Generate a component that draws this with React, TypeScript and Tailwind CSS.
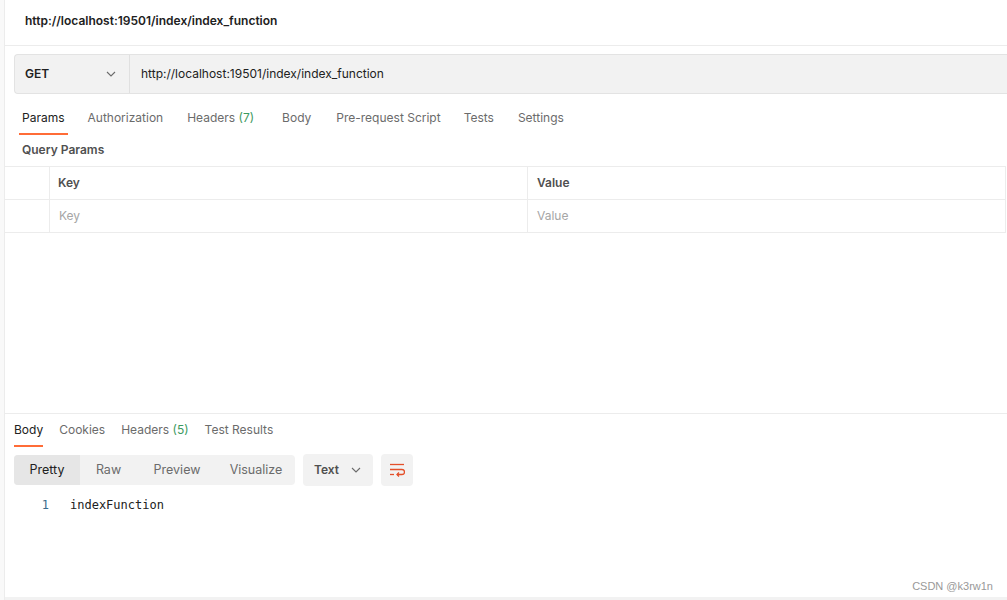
import React from "react";

export default function App() {
  const font = { fontFamily: "Inter, 'Noto Sans', sans-serif" };
  return (
    <div className="w-[1007px] h-[600px] bg-white flex overflow-hidden text-[12px]" style={font}>
      <div className="w-[5px] shrink-0 bg-[#f9f9f9] border-r border-[#ececec]" />
      <div className="flex-1 flex flex-col min-w-0">
        {/* Title */}
        <div className="h-[46px] shrink-0 border-b border-[#ececec] flex items-center pl-[20px] pb-[4px]">
          <span className="font-semibold text-[#212121] text-[12px]">http://localhost:19501/index/index_function</span>
        </div>
        {/* URL bar */}
        <div className="pl-[9px] pt-[8px]">
          <div className="h-[40px] flex bg-[#f2f2f2] border border-[#e3e3e3] border-r-0 rounded-l-[4px]">
            <div className="w-[115px] shrink-0 flex items-center justify-between pl-[10px] pr-[13px] border-r border-[#e0e0e0]">
              <span className="font-semibold text-[#212121]">GET</span>
              <svg width="10" height="6" viewBox="0 0 10 6" fill="none">
                <path d="M1 1l4 4 4-4" stroke="#6b6b6b" strokeWidth="1.1" />
              </svg>
            </div>
            <div className="flex items-center pl-[11px] text-[#212121]">http://localhost:19501/index/index_function</div>
          </div>
        </div>
        {/* Tabs */}
        <div className="flex items-end h-[41px] pl-[14px] text-[#6b6b6b]">
          <div className="px-[3px] pb-[6px] border-b-2 border-[#ff6c37] text-[#212121]">Params</div>
          <div className="ml-[20px] pb-[8px]">Authorization</div>
          <div className="ml-[24px] pb-[8px]">Headers <span className="text-[#3d9a5f]">(7)</span></div>
          <div className="ml-[28px] pb-[8px]">Body</div>
          <div className="ml-[25px] pb-[8px]">Pre-request Script</div>
          <div className="ml-[23px] pb-[8px]">Tests</div>
          <div className="ml-[24px] pb-[8px]">Settings</div>
        </div>
        <div className="h-[31px] flex items-center pl-[17px] pb-[1px] font-semibold text-[#505050]">Query Params</div>
        {/* Table */}
        <div className="border-t border-[#ececec] mr-[1px]">
          <div className="flex h-[33px] border-b border-[#ececec]">
            <div className="w-[45px] shrink-0 border-r border-[#ececec]" />
            <div className="w-[478px] shrink-0 border-r border-[#ececec] flex items-center pl-[8px] font-semibold text-[#505050]">Key</div>
            <div className="flex-1 border-r border-[#ececec] flex items-center pl-[9px] font-semibold text-[#505050]">Value</div>
          </div>
          <div className="flex h-[33px] border-b border-[#ececec]">
            <div className="w-[45px] shrink-0 border-r border-[#ececec]" />
            <div className="w-[478px] shrink-0 border-r border-[#ececec] flex items-center pl-[9px] text-[#a6a6a6]">Key</div>
            <div className="flex-1 border-r border-[#ececec] flex items-center pl-[9px] text-[#a6a6a6]">Value</div>
          </div>
        </div>
        <div className="h-[181px] shrink-0 border-b border-[#ececec]" />
        {/* Response tabs */}
        <div className="flex items-end h-[33px] pl-[9px] text-[#6b6b6b]">
          <div className="pb-[6px] border-b-2 border-[#ff6c37] text-[#212121]">Body</div>
          <div className="ml-[16px] pb-[8px]">Cookies</div>
          <div className="ml-[16px] pb-[8px]">Headers <span className="text-[#3d9a5f]">(5)</span></div>
          <div className="ml-[16px] pb-[8px]">Test Results</div>
        </div>
        <div className="flex items-center pl-[9px] mt-[7px] gap-[8px]">
          <div className="flex h-[30px] bg-[#f2f2f2] rounded-[4px] overflow-hidden text-[#6b6b6b] text-[12.5px]">
            <div className="w-[66px] bg-[#e6e6e6] text-[#212121] flex items-center justify-center">Pretty</div>
            <div className="w-[57px] flex items-center justify-center">Raw</div>
            <div className="w-[80px] flex items-center justify-center">Preview</div>
            <div className="w-[78px] flex items-center justify-center">Visualize</div>
          </div>
          <div className="w-[70px] h-[32px] bg-[#f2f2f2] rounded-[4px] flex items-center justify-between pl-[11px] pr-[12px]">
            <span className="font-semibold text-[12px] text-[#505050]">Text</span>
            <svg width="10" height="6" viewBox="0 0 10 6" fill="none">
              <path d="M1 1l4 4 4-4" stroke="#6b6b6b" strokeWidth="1.1" />
            </svg>
          </div>
          <div className="w-[32px] h-[32px] bg-[#f2f2f2] rounded-[4px] flex items-center justify-center">
            <svg width="16" height="14" viewBox="0 0 16 14" fill="none" stroke="#e4502a" strokeWidth="1.3">
              <path d="M1 1.5h14" />
              <path d="M1 6.5h12a2.5 2.5 0 0 1 0 5H8" />
              <path d="M10 9.5l-2 2 2 2" />
              <path d="M1 11.5h4" />
            </svg>
          </div>
        </div>
        <div className="flex mt-[10px]" style={{ fontFamily: "'DejaVu Sans Mono', 'Liberation Mono', monospace" }}>
          <span className="w-[44px] text-right text-[#3a6b8c] text-[12px]">1</span>
          <span className="ml-[21px] text-[#212121] text-[12px]">indexFunction</span>
        </div>
        <div className="flex-1" />
        <div className="flex justify-end pr-[14px] pb-[3px] text-[11px] text-[#999999]" style={{ fontFamily: "'Liberation Sans', sans-serif" }}>
          CSDN @k3rw1n
        </div>
        <div className="h-[3px] bg-[#f2f2f2]" />
      </div>
    </div>
  );
}
